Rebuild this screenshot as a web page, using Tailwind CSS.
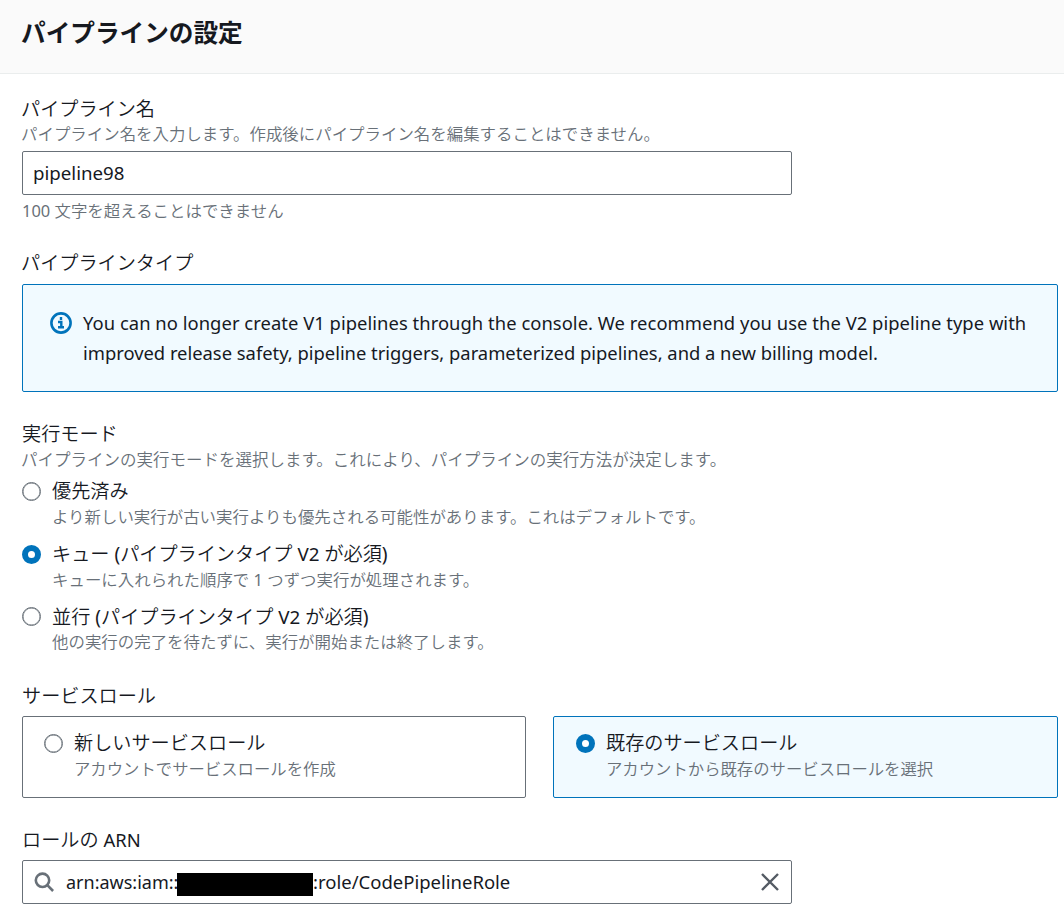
<!DOCTYPE html>
<html lang="ja">
<head>
<meta charset="utf-8">
<title>パイプラインの設定</title>
<script src="https://cdn.jsdelivr.net/npm/@tailwindcss/browser@4"></script>
</head>
<body class="h-[918px] overflow-hidden bg-white font-['Noto_Sans','Noto_Sans_CJK_JP',sans-serif] text-[19.15px] text-[#16191f] whitespace-nowrap">
<header class="h-[74px] border-b border-[#eaeded] bg-[#fafafa] pl-[21px] pt-[15px]">
  <h1 class="text-[24.65px] leading-[36px] font-bold">パイプラインの設定</h1>
</header>
<main class="flex flex-col pl-[22px] pr-[6px] pt-[22px]">
  <section>
    <h2 class="-ml-px h-[26px] leading-[26px] font-[350]">パイプライン名</h2>
    <p class="-ml-px h-6 text-[16.45px] leading-6 font-[350] text-[#687078]">パイプライン名を入力します。作成後にパイプライン名を編集することはできません。</p>
    <div class="mt-[5px] flex h-[44px] w-[770px] items-center rounded-[2px] border border-[#687078] pl-[10px] text-[18.7px]"><span>pipeline98</span></div>
    <p class="mt-1 h-6 text-[16.45px] leading-6 font-[350] text-[#687078]"><span class="font-normal">100</span> 文字を超えることはできません</p>
  </section>
  <section class="mt-[27px]">
    <h2 class="-ml-px h-[26px] leading-[26px] font-[350]">パイプラインタイプ</h2>
    <div class="mt-2 flex h-[108px] rounded-[2px] border border-[#0073bb] bg-[#f1faff] pl-[27px] pt-[23px]">
      <svg class="mt-[4px] size-[22px] shrink-0" viewBox="0 0 22 22" fill="none" stroke="#0073bb"><circle cx="11" cy="11" r="9.6" stroke-width="2.6"/><path d="M11 5v3M8 10h3.3v5M8 15.3h6" stroke-width="2.4"/></svg>
      <p class="ml-[11px] text-[18.4px] leading-[30px]"><span class="tracking-[0.04px]">You can no longer create V1 pipelines through the console. We recommend you use the V2 pipeline type with</span><br><span class="tracking-[-0.015px]">improved release safety, pipeline triggers, parameterized pipelines, and a new billing model.</span></p>
    </div>
  </section>
  <section class="mt-[29px]">
    <h2 class="h-[26px] leading-[26px] font-[350]">実行モード</h2>
    <p class="-ml-px mt-[1px] h-6 text-[16.5px] leading-6 font-[350] text-[#687078]">パイプラインの実行モードを選択します。これにより、パイプラインの実行方法が決定します。</p>
    <div class="mt-[6px] flex flex-col gap-3">
      <div class="flex h-[51px] gap-[11px]">
        <span class="mt-[4px] size-[19px] rounded-full border border-[#687078] bg-white shadow-[inset_0_0_0_0.5px_#687078]"></span>
        <div><h3 class="h-[26px] leading-[26px] font-[350]">優先済み</h3><p class="mt-px h-6 text-[16.45px] leading-6 font-[350] text-[#687078]">より新しい実行が古い実行よりも優先される可能性があります。これはデフォルトです。</p></div>
      </div>
      <div class="flex h-[51px] gap-[11px]">
        <span class="mt-[4px] size-[19px] rounded-full border-[6px] border-[#0073bb] bg-white"></span>
        <div><h3 class="h-[26px] leading-[26px] font-[350]">キュー <span class="font-normal">(</span>パイプラインタイプ <span class="text-[18.8px] font-normal">V2</span> が必須<span class="font-normal">)</span></h3><p class="mt-px h-6 text-[16.45px] leading-6 font-[350] text-[#687078]">キューに入れられた順序で <span class="font-normal">1</span> つずつ実行が処理されます。</p></div>
      </div>
      <div class="flex h-[51px] gap-[11px]">
        <span class="mt-[3px] size-[19px] rounded-full border border-[#687078] bg-white shadow-[inset_0_0_0_0.5px_#687078]"></span>
        <div><h3 class="h-[26px] leading-[26px] font-[350]">並行 <span class="font-normal">(</span>パイプラインタイプ <span class="text-[18.8px] font-normal">V2</span> が必須<span class="font-normal">)</span></h3><p class="h-6 text-[16.45px] leading-6 font-[350] text-[#687078]">他の実行の完了を待たずに、実行が開始または終了します。</p></div>
      </div>
    </div>
  </section>
  <section class="mt-[28px]">
    <h2 class="h-[26px] leading-[26px] font-[350]">サービスロール</h2>
    <div class="mt-[7px] flex gap-[27px]">
      <div class="flex h-[82px] w-[504px] gap-[11px] rounded-[2px] border border-[#687078] pl-[21px] pt-[13px]">
        <span class="mt-[4px] size-[19px] rounded-full border border-[#687078] bg-white shadow-[inset_0_0_0_0.5px_#687078]"></span>
        <div><h3 class="h-[26px] leading-[26px] font-[350]">新しいサービスロール</h3><p class="mt-px h-6 text-[16.38px] leading-6 font-[350] text-[#687078]">アカウントでサービスロールを作成</p></div>
      </div>
      <div class="flex h-[82px] w-[505px] gap-[11px] rounded-[2px] border border-[#0073bb] bg-[#f1faff] pl-[22px] pt-[13px]">
        <span class="mt-[4px] size-[19px] rounded-full border-[6px] border-[#0073bb] bg-white"></span>
        <div><h3 class="h-[26px] leading-[26px] font-[350]">既存のサービスロール</h3><p class="mt-px h-6 text-[16.38px] leading-6 font-[350] text-[#687078]">アカウントから既存のサービスロールを選択</p></div>
      </div>
    </div>
  </section>
  <section class="mt-[29px]">
    <h2 class="h-[26px] leading-[26px] font-[350]">ロールの <span class="text-[18.4px] font-normal">ARN</span></h2>
    <div class="mt-[7px] flex h-[44px] w-[770px] items-center rounded-[2px] border border-[#687078] pl-[11px] pr-[11px] text-[18px]">
      <svg class="size-5 shrink-0" viewBox="0 0 20 20" fill="none" stroke="#687078" stroke-width="2.6"><circle cx="8.5" cy="8.3" r="6.7"/><path d="M13.3 13.2l5.8 5.8"/></svg>
      <span class="ml-[12px] w-[111px]">arn:aws:iam::</span><span class="mt-[5px] h-[23px] w-[136px] bg-black"></span><span class="text-[18.5px]">:role/CodePipelineRole</span>
      <svg class="ml-auto size-5" viewBox="0 0 20 20" fill="none" stroke="#545b64" stroke-width="2.4"><path d="M2 2l16 16M18 2L2 18"/></svg>
    </div>
  </section>
</main>
</body>
</html>
